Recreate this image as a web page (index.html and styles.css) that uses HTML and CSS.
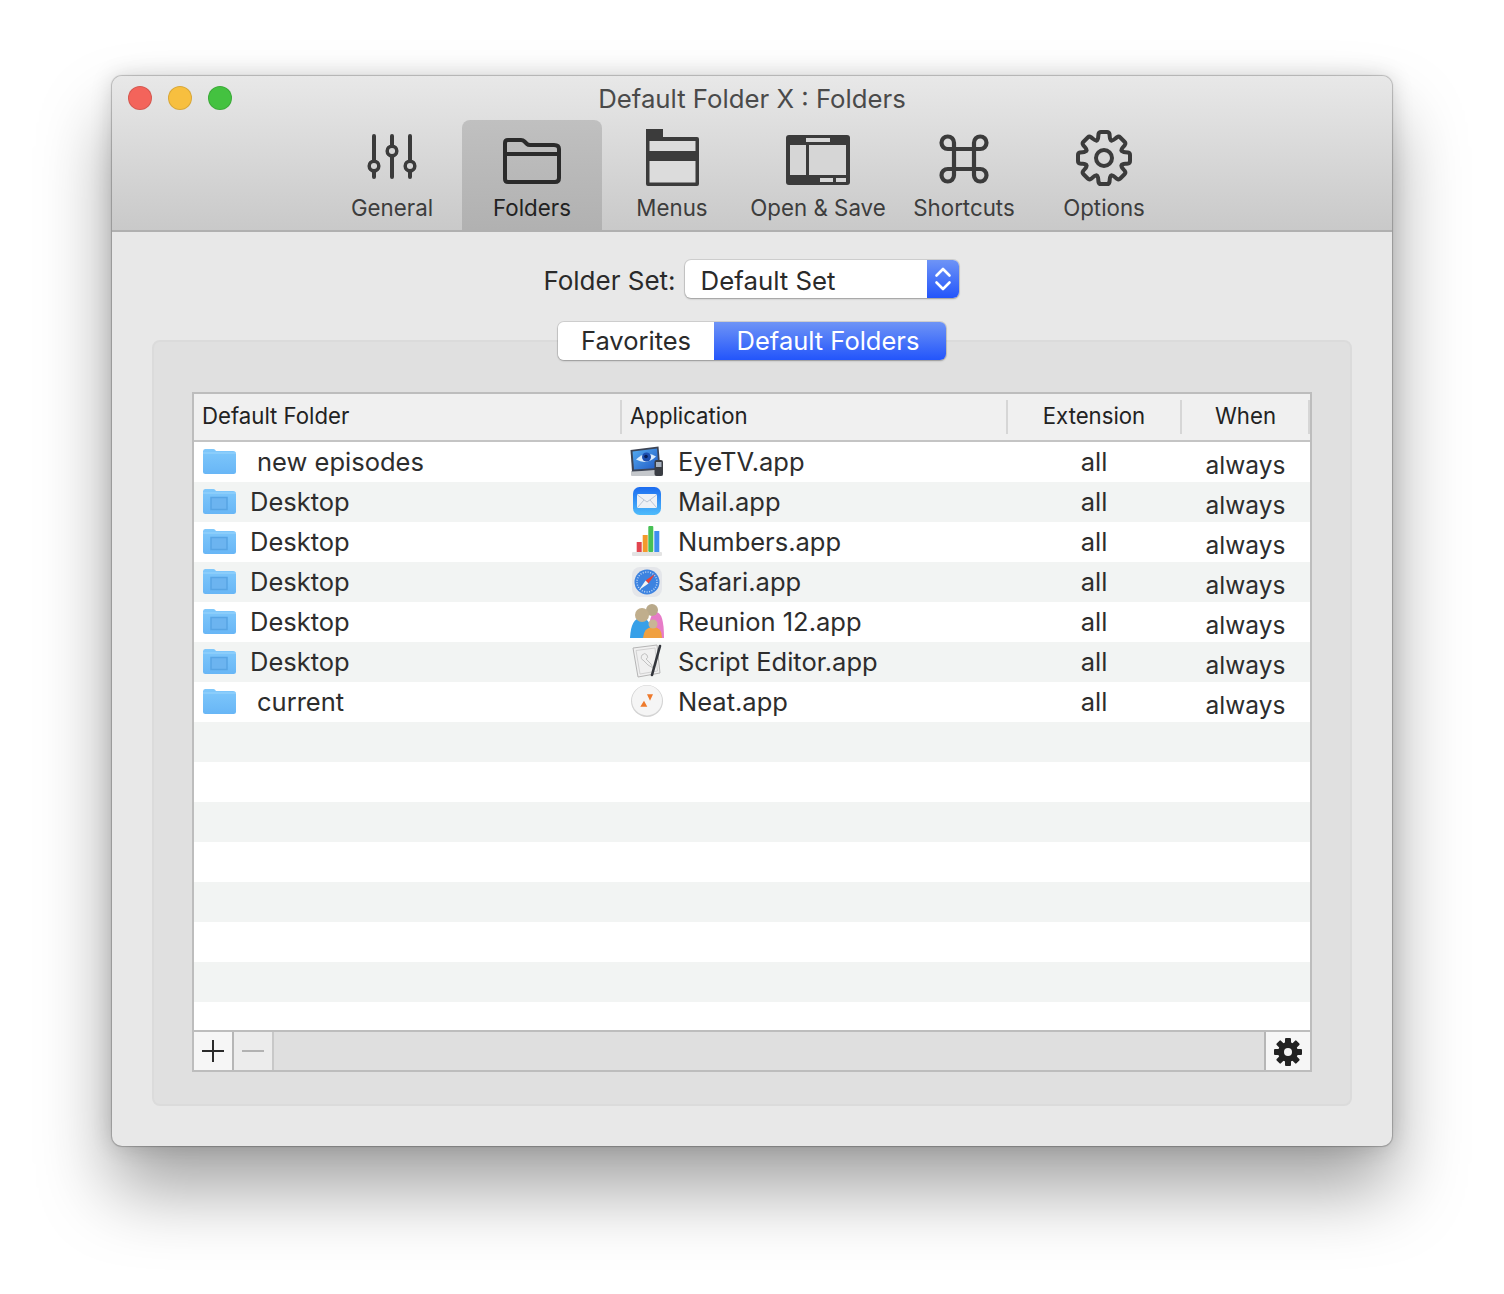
FILE: index.html
```html
<!DOCTYPE html>
<html lang="en">
<head>
<meta charset="utf-8">
<title>Default Folder X : Folders</title>
<link rel="stylesheet" href="styles.css">
</head>
<body>
<svg class="defs" width="0" height="0" aria-hidden="true">
  <defs>
    <linearGradient id="fold" x1="0" y1="0" x2="0" y2="1"><stop offset="0" stop-color="#7fc8fb"/><stop offset="1" stop-color="#68b6f6"/></linearGradient>
    <linearGradient id="mailg" x1="0" y1="0" x2="0" y2="1"><stop offset="0" stop-color="#1c6cf0"/><stop offset="1" stop-color="#4fbcfb"/></linearGradient>
    <linearGradient id="screen" x1="0" y1="0" x2="1" y2="1"><stop offset="0" stop-color="#55adf2"/><stop offset="1" stop-color="#2059c4"/></linearGradient>
    <symbol id="folder" viewBox="0 0 34 26">
      <path d="M1 3.500Q1 1 3 1h8.500q1.500 0 2.500 2h17q3 0 3 3v17.500q0 2.500-2.500 2.500h-28q-2.500 0-2.500-2.500z" fill="url(#fold)"/>
      <path d="M1 5h33" stroke="#9ad5fc" stroke-width="1"/>
    </symbol>
    <symbol id="desk" viewBox="0 0 34 26">
      <use href="#folder" width="34" height="26"/>
      <rect x="9" y="9.500" width="16" height="12" fill="#6cb4f0" stroke="#57a4e4" stroke-width="1.500"/>
    </symbol>
    <g id="cog-seg"><path d="M-7.300-17.600C-5.500-18.500-6-20-5.500-24-5.200-25.500-4.500-26-3-26H3C4.500-26 5.200-25.500 5.500-24 6-20 5.500-18.500 7.300-17.600" fill="none" stroke="#3b3b3b" stroke-width="4" stroke-linecap="round"/></g>
  </defs>
</svg>

<main class="window">
  <header class="titlebar">
    <div class="lights"><i class="light red"></i><i class="light yellow"></i><i class="light green"></i></div>
    <div class="title">Default Folder X : Folders</div>
    <nav class="toolbar">
      <div class="tool">
        <svg class="tool-icon" viewBox="0 0 140 70">
          <g fill="none" stroke="#3b3b3b" stroke-width="4" stroke-linecap="round">
            <path d="M52 16v41M70 16v41M88 16v41"/>
            <g fill="#d4d4d4" stroke-width="3.500"><circle cx="52" cy="46" r="4.800"/><circle cx="70" cy="31" r="4.800"/><circle cx="88" cy="46" r="4.800"/></g>
          </g>
        </svg>
        <span>General</span>
      </div>
      <div class="tool active">
        <svg class="tool-icon" viewBox="0 0 140 70">
          <path d="M43 23q0-3 3-3h13q2 0 3.500 1.500l2.500 2.500q1 1 3 1h24q5 0 5 4v29q0 4-4 4H46q-3 0-3-3zM43 34h54" fill="none" stroke="#2b2b2b" stroke-width="4" stroke-linejoin="round"/>
        </svg>
        <span>Folders</span>
      </div>
      <div class="tool">
        <svg class="tool-icon" viewBox="0 0 140 70">
          <path d="M44 9h17v8h34q2 0 2 2v45q0 2-2 2H46q-2 0-2-2z" fill="#3b3b3b"/>
          <path d="M47.500 21h46v10h-46zM47.500 41h46v21.500h-46z" fill="#dcdcdc"/>
        </svg>
        <span>Menus</span>
      </div>
      <div class="tool wide">
        <svg class="tool-icon" viewBox="0 0 152 70">
          <rect x="44" y="15" width="64" height="50" rx="3" fill="#3b3b3b"/>
          <path d="M48 25h16v30H48zM67 25h37v30H67zM64 18h24v4H64zM78 58h13v4H78zM94 58h10v4H94z" fill="#d6d6d6"/>
        </svg>
        <span>Open &amp; Save</span>
      </div>
      <div class="tool">
        <svg class="tool-icon" viewBox="0 0 140 70">
          <path d="M60 29h20v20H60zM60 29h-6.250a6.250 6.250 0 1 1 6.250-6.250zM80 29v-6.250a6.250 6.250 0 1 1 6.250 6.250zM80 49h6.250a6.250 6.250 0 1 1-6.250 6.250zM60 49v6.250a6.250 6.250 0 1 1-6.250-6.250z" fill="none" stroke="#3b3b3b" stroke-width="4.200"/>
        </svg>
        <span>Shortcuts</span>
      </div>
      <div class="tool">
        <svg class="tool-icon" viewBox="0 0 140 70">
          <g transform="translate(70 38)">
            <use href="#cog-seg"/><use href="#cog-seg" transform="rotate(45)"/><use href="#cog-seg" transform="rotate(90)"/><use href="#cog-seg" transform="rotate(135)"/>
            <use href="#cog-seg" transform="rotate(180)"/><use href="#cog-seg" transform="rotate(225)"/><use href="#cog-seg" transform="rotate(270)"/><use href="#cog-seg" transform="rotate(315)"/>
            <circle r="8" fill="none" stroke="#3b3b3b" stroke-width="4"/>
          </g>
        </svg>
        <span>Options</span>
      </div>
    </nav>
  </header>

  <section class="content">
    <div class="set-row">
      <label class="set-label">Folder Set:</label>
      <div class="popup">
        <span class="popup-text">Default Set</span>
        <span class="popup-arrows">
          <svg width="18" height="32" viewBox="0 0 18 32"><path d="M2.500 12.500 9 6l6.500 6.500M2.500 19.500 9 26l6.500-6.500" fill="none" stroke="#fff" stroke-width="2.600" stroke-linecap="round" stroke-linejoin="round"/></svg>
        </span>
      </div>
    </div>

    <div class="segments">
      <div class="seg">Favorites</div>
      <div class="seg on">Default Folders</div>
    </div>

    <div class="panel">
      <div class="table">
        <div class="thead">
          <div class="th left">Default Folder</div>
          <div class="th left">Application</div>
          <div class="th">Extension</div>
          <div class="th">When</div>
        </div>
        <div class="rows">
          <div class="row">
            <div class="c1"><svg class="fi"><use href="#folder"/></svg><span class="plain">new episodes</span></div>
            <div class="c2">
              <svg class="ai" viewBox="0 0 40 40">
                <path d="M4 29h30l2 4q0 1-1 1H5q-1 0-1-1z" fill="#c4c7cb"/>
                <path d="M3.500 8 31.500 4.500 33.500 28 5 29.500z" fill="#3d4454"/>
                <path d="M5.500 9.500 30 6.500l1.500 19.500L7 27.500z" fill="url(#screen)"/>
                <path d="M9 17.500q10-9 20-3-9 9-20 3z" fill="#dcecfb"/>
                <circle cx="19.500" cy="15" r="4.500" fill="#1d4fb0"/><circle cx="19" cy="14.500" r="1.800" fill="#0a1f55"/>
                <rect x="27.500" y="18" width="8.500" height="16" rx="2" fill="#3a3d44"/><rect x="29" y="20" width="5.500" height="5" fill="#a6b0be"/>
              </svg>
              <span>EyeTV.app</span>
            </div>
            <div class="c3">all</div><div class="c4">always</div>
          </div>
          <div class="row">
            <div class="c1"><svg class="fi"><use href="#desk"/></svg><span>Desktop</span></div>
            <div class="c2">
              <svg class="ai" viewBox="0 0 40 40">
                <rect x="6" y="5" width="28" height="28" rx="6.500" fill="url(#mailg)"/>
                <rect x="10" y="12" width="20" height="14" rx="1.500" fill="#eef1f6"/>
                <path d="M10.500 13 20 20l9.500-7M10.500 25.500 17 18M29.500 25.500 23 18" fill="none" stroke="#bcc6d4" stroke-width="1"/>
              </svg>
              <span>Mail.app</span>
            </div>
            <div class="c3">all</div><div class="c4">always</div>
          </div>
          <div class="row">
            <div class="c1"><svg class="fi"><use href="#desk"/></svg><span>Desktop</span></div>
            <div class="c2">
              <svg class="ai" viewBox="0 0 40 40">
                <rect x="9.700" y="20" width="5" height="10" fill="#e2454f"/>
                <rect x="15.700" y="13" width="5" height="17" fill="#f39a2c"/>
                <rect x="21.300" y="4" width="5" height="26" rx="1" fill="#47c155"/>
                <rect x="27.300" y="9" width="5" height="21" fill="#3f8ff0"/>
                <rect x="5" y="30" width="30" height="4" rx="1" fill="#e3e3e3"/>
              </svg>
              <span>Numbers.app</span>
            </div>
            <div class="c3">all</div><div class="c4">always</div>
          </div>
          <div class="row">
            <div class="c1"><svg class="fi"><use href="#desk"/></svg><span>Desktop</span></div>
            <div class="c2">
              <svg class="ai" viewBox="0 0 40 40">
                <rect x="5" y="5" width="30" height="30" rx="8" fill="#e4e6ea"/>
                <circle cx="20" cy="20" r="12.500" fill="#3d83e0"/>
                <circle cx="20" cy="20" r="10" fill="none" stroke="#bcd6f5" stroke-width="1.500" stroke-dasharray="1 1.500"/>
                <path d="M28 12 21.500 21.500 18.500 18.500z" fill="#e8423a"/>
                <path d="M12 28 18.500 18.500 21.500 21.500z" fill="#f4f4f4"/>
              </svg>
              <span>Safari.app</span>
            </div>
            <div class="c3">all</div><div class="c4">always</div>
          </div>
          <div class="row">
            <div class="c1"><svg class="fi"><use href="#desk"/></svg><span>Desktop</span></div>
            <div class="c2">
              <svg class="ai" viewBox="0 0 40 40">
                <path d="M21 36q1-26 8-26 8 0 8 26z" fill="#e77cc8"/>
                <circle cx="25" cy="8" r="6" fill="#b8a98a"/>
                <path d="M3 36q1-20 11-20 11 0 11 20z" fill="#37a0e8"/>
                <circle cx="15" cy="13" r="7" fill="#c0ae8c"/>
                <path d="M16 36q1-11 10-11 9 0 9 11z" fill="#f0a040"/>
                <circle cx="26" cy="22" r="4.500" fill="#c9b595"/>
              </svg>
              <span>Reunion 12.app</span>
            </div>
            <div class="c3">all</div><div class="c4">always</div>
          </div>
          <div class="row">
            <div class="c1"><svg class="fi"><use href="#desk"/></svg><span>Desktop</span></div>
            <div class="c2">
              <svg class="ai" viewBox="0 0 40 40">
                <path d="M6 6 30 3l3 28-22 4z" fill="#f0f0f0" stroke="#b5b5b5" stroke-width="1"/>
                <path d="M9 8.500 28 6l2.500 23L13 32z" fill="none" stroke="#d2d2d2" stroke-width="1"/>
                <path d="M15 13q3-3 5 0t-1 4l5 5 2 4-5-3-5-5q-3-1-1-5z" fill="none" stroke="#c2c2c2" stroke-width="1"/>
                <path d="M33 4 25 33" stroke="#33363c" stroke-width="2.600" stroke-linecap="round"/>
              </svg>
              <span>Script Editor.app</span>
            </div>
            <div class="c3">all</div><div class="c4">always</div>
          </div>
          <div class="row">
            <div class="c1"><svg class="fi"><use href="#folder"/></svg><span class="plain">current</span></div>
            <div class="c2">
              <svg class="ai" viewBox="0 0 40 40">
                <circle cx="20" cy="19" r="16" fill="#d4d4d4"/>
                <circle cx="20" cy="18.500" r="15" fill="#f5f5f5"/>
                <path d="M20 12.300h6L23 18.700zM13.300 24.700h7L17 18.700z" fill="#ee7a2c"/>
              </svg>
              <span>Neat.app</span>
            </div>
            <div class="c3">all</div><div class="c4">always</div>
          </div>
          <div class="row"></div><div class="row"></div><div class="row"></div><div class="row"></div>
          <div class="row"></div><div class="row"></div><div class="row"></div><div class="row"></div>
        </div>
        <div class="tfoot">
          <div class="fbtn">
            <svg width="24" height="24" viewBox="0 0 24 24"><path d="M1 12h22M12 1v22" stroke="#2a2a2a" stroke-width="2"/></svg>
          </div>
          <div class="fbtn dim">
            <svg width="24" height="24" viewBox="0 0 24 24"><path d="M1 12h22" stroke="#b2b2b2" stroke-width="2"/></svg>
          </div>
          <div class="fspace"></div>
          <div class="fbtn gear">
            <svg width="30" height="30" viewBox="-15 -15 30 30">
              <g fill="#222">
                <rect x="-3" y="-14" width="6" height="28" rx="1"/>
                <rect x="-3" y="-14" width="6" height="28" rx="1" transform="rotate(45)"/>
                <rect x="-3" y="-14" width="6" height="28" rx="1" transform="rotate(90)"/>
                <rect x="-3" y="-14" width="6" height="28" rx="1" transform="rotate(135)"/>
              </g>
              <circle r="7" fill="none" stroke="#222" stroke-width="6"/>
              <circle r="4" fill="#f5f5f5"/>
            </svg>
          </div>
        </div>
      </div>
    </div>
  </section>
</main>
</body>
</html>
```
FILE: styles.css
```css
* { box-sizing: border-box; }
html, body { margin: 0; padding: 0; height: 100%; background: #fff; overflow: hidden; }
body { font-family: Inter, "Liberation Sans", sans-serif; color: #2a2a2a; }
.defs { position: absolute; }

.window {
  width: 1280px;
  height: 1070px;
  margin: 76px 0 0 112px;
  border-radius: 10px;
  background: #e8e8e8;
  box-shadow: 0 44px 72px rgba(0, 0, 0, .36), 0 0 22px rgba(0, 0, 0, .16), 0 0 1px 1px rgba(0, 0, 0, .22);
  display: flex;
  flex-direction: column;
  overflow: hidden;
}

.titlebar {
  position: relative;
  height: 156px;
  flex: none;
  border-bottom: 2px solid #b0b0b0;
  background: linear-gradient(#e8e8e8, #c9c9c9);
  display: flex;
  flex-direction: column;
}
.lights { position: absolute; left: 16px; top: 10px; display: flex; gap: 16px; }
.light { width: 24px; height: 24px; border-radius: 50%; display: block; border: 1px solid rgba(0, 0, 0, .12); }
.red { background: #f3645b; }
.yellow { background: #f7bf3f; }
.green { background: #44c240; }
.title {
  height: 44px;
  line-height: 46px;
  text-align: center;
  font-size: 25.750px;
  color: #4a4a4a;
}
.toolbar { display: flex; padding-left: 210px; flex: 1; }
.tool {
  width: 140px;
  display: flex;
  flex-direction: column;
  align-items: center;
  font-size: 22.300px;
  color: #3d3d3d;
  border-radius: 8px 8px 0 0;
}
.tool.wide { width: 152px; }
.tool.active { background: linear-gradient(#c0c0c0, #b1b1b1); color: #222; }
.tool-icon { width: 100%; height: 70px; flex: none; }
.tool span { line-height: 30px; margin-top: 3px; white-space: nowrap; }

.content { flex: 1; min-height: 0; padding: 27px 40px 40px; display: flex; flex-direction: column; }
.set-row { display: flex; justify-content: center; align-items: center; gap: 9px; height: 40px; flex: none; padding-right: 2px; }
.set-label { font-size: 26px; color: #2a2a2a; padding-top: 2px; }
.popup {
  width: 274px;
  height: 38px;
  background: #fff;
  border-radius: 6px;
  box-shadow: 0 0 0 1px rgba(0, 0, 0, .1), 0 1px 2px rgba(0, 0, 0, .25);
  display: flex;
  justify-content: space-between;
  align-items: center;
  overflow: hidden;
  font-size: 25.800px;
}
.popup-text { padding: 2px 0 0 16px; }
.popup-arrows {
  width: 32px;
  height: 100%;
  background: linear-gradient(#6e94f6, #2355fb);
  display: flex;
  align-items: center;
  justify-content: center;
}

.segments {
  position: relative;
  z-index: 1;
  flex: none;
  align-self: center;
  margin-top: 23px;
  margin-bottom: -20px;
  display: flex;
  height: 38px;
  border-radius: 6px;
  overflow: hidden;
  box-shadow: 0 0 0 1px rgba(0, 0, 0, .1), 0 1px 2px rgba(0, 0, 0, .25);
  font-size: 25.500px;
}
.seg { width: 156px; background: #fff; display: flex; align-items: center; justify-content: center; padding-bottom: 2px; }
.seg.on { width: 232px; background: linear-gradient(#6e94f6, #2355fb); color: #fff; padding-right: 4px; }

.panel {
  flex: 1;
  min-height: 0;
  background: #e0e0e0;
  border: 2px solid #dbdbdb;
  border-radius: 8px;
  padding: 50px 38px 32px;
  display: flex;
}
.table {
  flex: 1;
  min-height: 0;
  border: 2px solid #bdbdbd;
  background: #fff;
  display: flex;
  flex-direction: column;
}
.thead, .row { display: grid; grid-template-columns: 427px 386px 174px 129px; }
.thead {
  height: 48px;
  flex: none;
  background: #f0f0f0;
  border-bottom: 2px solid #c4c4c4;
  font-size: 22.200px;
  color: #222;
}
.th { display: flex; align-items: center; justify-content: center; position: relative; height: 46px; padding-bottom: 3px; }
.th.left { justify-content: flex-start; padding-left: 8px; }
.th + .th::before {
  content: "";
  position: absolute;
  left: -1px;
  top: 6px;
  bottom: 6px;
  width: 2px;
  background: #d6d6d6;
}
.th.left + .th.left { padding-left: 9px; }
.th:last-child::after {
  content: "";
  position: absolute;
  right: 0;
  top: 6px;
  bottom: 6px;
  width: 2px;
  background: #d6d6d6;
}

.rows { flex: 1; overflow: hidden; min-height: 0; }
.row { height: 40px; font-size: 25.500px; color: #2d2d2d; background: #fff; }
.row:nth-child(even) { background: #f2f4f3; }
.row > div { display: flex; align-items: center; min-width: 0; white-space: nowrap; }
.row span { margin-bottom: 2px; }
.c1 { padding-left: 8px; }
.c2 { padding-left: 6px; }
.c3, .c4 { justify-content: center; }
.c3 { padding-bottom: 2px; }
.c4 { padding-top: 6px; font-size: 24.500px; }
.fi { width: 34px; height: 26px; margin: 0 14px 2px 0; flex: none; }
.plain { margin-left: 7px; }
.ai { width: 40px; height: 40px; margin-right: 11px; flex: none; }

.tfoot {
  height: 40px;
  flex: none;
  display: flex;
  background: #dfdfdf;
  border-top: 2px solid #bdbdbd;
}
.fbtn {
  width: 40px;
  display: flex;
  align-items: center;
  justify-content: center;
  background: #f6f6f6;
  border-right: 2px solid #b6b6b6;
}
.fbtn.dim { background: #ececec; border-right-color: #c8c8c8; }
.fspace { flex: 1; }
.fbtn.gear { width: 46px; border-right: 0; border-left: 2px solid #b6b6b6; padding-top: 2px; }
```
